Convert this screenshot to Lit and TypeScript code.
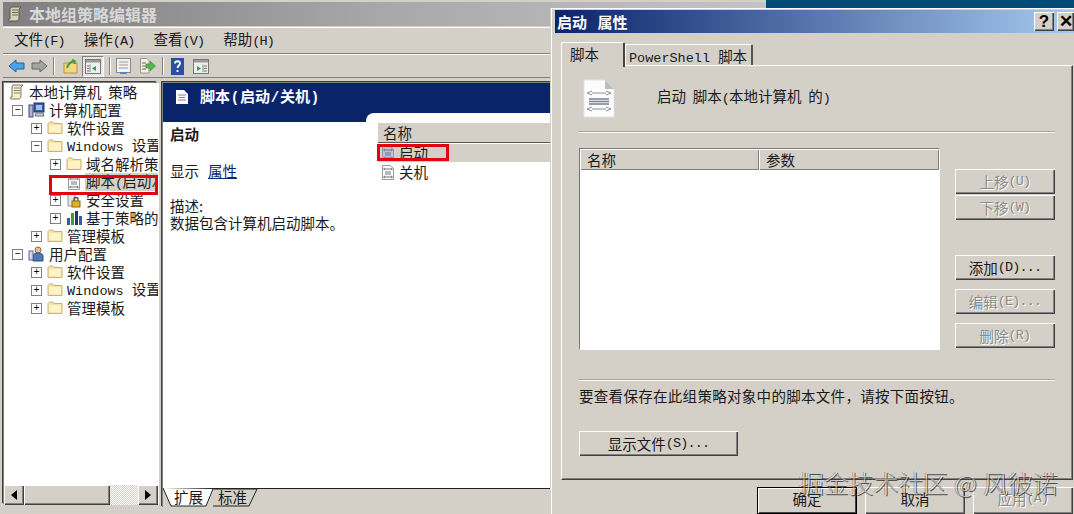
import { LitElement, html, css, svg } from "lit";
import { customElement } from "lit/decorators.js";

const L = (t: string) => html`<span class="lat">${t}</span>`;
const M = (t: string) => html`<span class="lat mn">${t}</span>`;

const folder = html`<svg class="ic" width="16" height="14" viewBox="0 0 16 14"><path d="M1 3.500V12.500H15V2.500H7L6 1H2.500L1 2.500Z" fill="#f7e3a4" stroke="#c9b27a"/><path d="M2 4H14V11.500H2Z" fill="#fdf2c8"/></svg>`;
const scriptIcon = (sel = false) => html`<svg class="ic" width="14" height="15" viewBox="0 0 14 15"><path d="M1.500 .5H9.500L12.500 3.500V14.500H1.500Z" fill="${sel ? "#b9c2da" : "#fff"}" stroke="#9a9a9a"/><path d="M4 4H10M4 7H10M4 9H10M4 12H10M4 3L2.500 4L4 5M10 3L11.500 4L10 5M4 11L2.500 12L4 13M10 11L11.500 12L10 13" stroke="#6d7383" fill="none"/></svg>`;
const scriptTree = html`<svg class="ic" width="16" height="15" viewBox="0 0 16 15"><path d="M2.500 .5H10.500L13.500 3.500V14.500H2.500Z" fill="#fff" stroke="#9a9a9a"/><path d="M5 4H11M5 7H11M5 9H11M5 12H11M5 3L3.500 4L5 5M11 3L12.500 4L11 5M5 11L3.500 12L5 13M11 11L12.500 12L11 13" stroke="#6d7383" fill="none"/></svg>`;
const policy = html`<svg class="ic" width="16" height="16" viewBox="0 0 16 16"><path d="M4 1H14L12 3V12C12 14 11 15 9 15H2C1 15 1 13 2 13H3V3Z" fill="#f4edd0" stroke="#7b7560"/><path d="M5 4H11M5 6.500H11M5 9H11" stroke="#8a8268"/></svg>`;
const computer = html`<svg class="ic" width="17" height="16" viewBox="0 0 17 16"><rect x="6" y="1" width="10" height="9" fill="#3a5fa8" stroke="#1c2f63"/><rect x="8" y="3" width="6" height="5" fill="#9ec3ee"/><path d="M8 11H15L16 14H7Z" fill="#c9ccd4" stroke="#6c7080"/><rect x="1" y="3" width="4" height="12" fill="#aab6d0" stroke="#3e4a70"/></svg>`;
const userIc = html`<svg class="ic" width="17" height="16" viewBox="0 0 17 16"><circle cx="10" cy="4" r="3" fill="#e9bf95" stroke="#8a6a48"/><path d="M5 15V10C5 8 7 7 10 7S15 8 15 10V15Z" fill="#4e79b5" stroke="#2d4a78"/><rect x="1" y="5" width="4" height="9" fill="#cfd8e8" stroke="#5c6a88"/></svg>`;
const secIc = html`<svg class="ic" width="16" height="15" viewBox="0 0 16 15"><path d="M2 1H9V13H2Z" fill="#dfe6ee" stroke="#8a95a5"/><rect x="6" y="8" width="8" height="6" fill="#e4b21f" stroke="#8d6c0c"/><path d="M8 8V6C8 4 12 4 12 6V8" fill="none" stroke="#555" stroke-width="1.400"/></svg>`;
const chartIc = html`<svg class="ic" width="16" height="16" viewBox="0 0 16 16"><rect x="1" y="8" width="3" height="7" fill="#2d5fae"/><rect x="5" y="3" width="3" height="12" fill="#3f9b46"/><rect x="9" y="1" width="3" height="14" fill="#24376f"/><rect x="13" y="6" width="3" height="9" fill="#2d5fae"/></svg>`;
const minus = html`<span class="exp">−</span>`;
const plus = html`<span class="exp">+</span>`;
const none = html`<span class="exp no"></span>`;

const arrow = (fill: string, stroke: string, flip: boolean) => html`<svg class="tb ${flip ? "flip" : ""}" width="17" height="14" viewBox="0 0 17 14"><path d="M1 7L8 1V4H16V10H8V13Z" fill="${fill}" stroke="${stroke}"/></svg>`;
const paneIc = (c: string, right = false) => html`<svg class="tb" width="16" height="15" viewBox="0 0 16 15"><rect x=".5" y=".5" width="15" height="14" fill="#eee" stroke="#777"/><rect x="1" y="1" width="14" height="2.500" fill="#9a9a9a"/><path d="M${right ? 10 : 5} 5.500V13" stroke="#888"/><path d="${right ? "M4 7L8 9.500L4 12Z" : "M11 7L7 9.500L11 12Z"}" fill="${c}"/><path d="${right ? "M11 7H14M11 9.500H14M11 12H14" : "M2 7H4M2 9.500H4M2 12H4"}" stroke="#777"/></svg>`;

const tree = [
  { lv: 0, ic: policy, t: html`本地计算机 策略` },
  { lv: 1, e: minus, ic: computer, t: html`计算机配置` },
  { lv: 2, e: plus, ic: folder, t: html`软件设置` },
  { lv: 2, e: minus, ic: folder, t: html`${L("Windows ")}设置` },
  { lv: 3, e: plus, ic: folder, t: html`域名解析策略` },
  { lv: 3, e: none, ic: scriptTree, t: html`脚本${M("(")}启动${M("/")}关机${M(")")}`, sel: true },
  { lv: 3, e: plus, ic: secIc, t: html`安全设置` },
  { lv: 3, e: plus, ic: chartIc, t: html`基于策略的 QoS` },
  { lv: 2, e: plus, ic: folder, t: html`管理模板` },
  { lv: 1, e: minus, ic: userIc, t: html`用户配置` },
  { lv: 2, e: plus, ic: folder, t: html`软件设置` },
  { lv: 2, e: plus, ic: folder, t: html`${L("Windows ")}设置` },
  { lv: 2, e: plus, ic: folder, t: html`管理模板` },
];

const indent = [9, 12, 31, 50];

@customElement("app-root")
export class AppRoot extends LitElement {
  static styles = css`
    :host {
      display: block;
      position: relative;
      width: 1074px;
      height: 514px;
      overflow: hidden;
      background: #004a75;
      font: 14.5px/18px "Noto Sans CJK SC", sans-serif;
      color: #1a1a1a;
      word-spacing: 3.5px;
    }
    .lat { font: 13.5px/18px "Liberation Mono", monospace; white-space: pre; word-spacing: 0; }
    .mn { letter-spacing: -.85px; }
    .mmc {
      position: absolute; left: 0; top: 0; width: 766px; height: 514px;
      background: #d4d0c8; display: flex; flex-direction: column;
      box-sizing: border-box; padding: 2px 0 0 0;
    }
    .title {
      height: 24px; margin-left: 3px; display: flex; align-items: center; gap: 6px; padding-left: 4px;
      background: linear-gradient(90deg, #7f7f7f, #a8a8a8 50%, #c4c4c4);
      color: #d8d8d8; font-weight: 700; font-size: 16px;
    }
    .menu { height: 27px; display: flex; align-items: center; margin: 1px 3px 0; padding-left: 11px; gap: 19px;
      border-top: 1px solid #fff; border-bottom: 1px solid #808080; box-sizing: border-box; }
    .tools { height: 24px; display: flex; align-items: center; margin: 0 3px; padding-left: 5px;
      border-top: 1px solid #fff; border-bottom: 1px solid #808080; box-sizing: border-box; }
    .tb { display: block; flex: none; }
    .flip { transform: scaleX(-1); }
    .sep { width: 1px; height: 18px; background: #808080; box-shadow: 1px 0 #fff; flex: none; }
    .sep.s1 { margin: 0 9px 0 5px; }
    .sep.s2 { margin: 0 6px 0 5px; }
    .sep.s3 { margin: 0 8px 0 6px; }
    .gap4 { width: 4px; flex: none; }
    .gap6 { width: 6px; flex: none; }
    .gap8 { width: 8px; flex: none; }
    .gap9 { width: 9px; flex: none; }
    .pressed { width: 22px; height: 21px; display: flex; align-items: center; justify-content: center; flex: none; box-sizing: border-box;
      border: 1px solid #fff; border-color: #808080 #fff #fff #808080;
      background: repeating-conic-gradient(#fff 0 25%, #d4d0c8 0 50%) 0 0 / 2px 2px; }
    .work { flex: 1; display: flex; gap: 5px; padding: 5px 0 0 4px; min-height: 0; align-items: flex-start; }
    .left { width: 154px; flex: none; display: flex; flex-direction: column; height: 422px; background: #fff;
      box-shadow: -1px -1px #808080, -2px -2px #404040, 1px 0 #fff; }
    .tree { flex: 1; overflow: hidden; }
    .row { display: flex; align-items: center; height: 18.04px; white-space: nowrap; overflow: hidden; }
    .row.sel .txt { background: #d4d0c8; }
    .txt { padding: 0 1px; margin-left: 3px; flex: none; }
    .exp { width: 9px; height: 9px; border: 1px solid #808080; flex: none; margin-right: 5px; font: 10px/9px "Liberation Mono", monospace; text-align: center; color: #000; background: #fff; }
    .exp.no { border-color: transparent; background: transparent; }
    .ic { display: block; flex: none; }
    .sb { height: 20px; display: flex; background: repeating-conic-gradient(#fff 0 25%, #d4d0c8 0 50%) 0 0 / 2px 2px; flex: none; }
    .bt3 { background: #d4d0c8; box-sizing: border-box; box-shadow: inset 1px 1px #fff, inset -1px -1px #404040, inset -2px -2px #808080; display: flex; align-items: center; justify-content: center; white-space: nowrap; }
    .sbb { width: 20px; flex: none; }
    .thumb { width: 86px; flex: none; }
    .track { flex: 1; }
    .right { flex: 1; height: 425px; display: flex; flex-direction: column; background: #fff; min-width: 0;
      box-shadow: -1px -1px #808080, -2px -2px #404040; }
    .hdr { background: #0a246a; color: #fff; font-weight: 700; font-size: 15px; flex: none; }
    .hdr-top { height: 30px; display: flex; align-items: center; gap: 11px; padding: 0 0 2px 12px; box-sizing: border-box; }
    .hp { display: inline-block; width: 10px; font: 700 14px/18px "Liberation Mono", monospace; text-align: center; }
    .hdr-low { height: 9px; display: flex; }
    .hdr-l { width: 203px; }
    .hdr-r { flex: 1; background: #fff; border-top-left-radius: 8px; }
    .body { flex: 1; display: flex; min-height: 0; }
    .desc { width: 215px; flex: none; box-sizing: border-box; padding: 3px 7px; }
    .desc b { display: block; margin-bottom: 19px; font-weight: 700; }
    .desc a { color: #0a246a; text-decoration: underline; margin-left: 9px; }
    .desc p { margin: 17px 0 0; line-height: 17px; }
    .list { flex: 1; padding-top: 1px; }
    .lhead { height: 19px; background: #d4d0c8; padding-left: 5px; display: flex; align-items: center; border-bottom: 1px solid #555; }
    .lrow { height: 18px; padding-left: 3px; display: flex; align-items: center; gap: 4px; margin-top: 1px; }
    .lrow.on { background: #d4d0c8; }
    .tabs { flex: none; height: 19px; display: flex; border-top: 1px solid #222; background: #d4d0c8; }
    .stab { position: relative; flex: none; height: 19px; line-height: 15px; box-sizing: border-box; }
    .stab svg { position: absolute; left: 0; top: -1px; }
    .stab span { position: relative; }
    .st1 { width: 50px; padding-left: 11px; }
    .st2 { width: 46px; padding-left: 5px; }

    .dlg {
      position: absolute; left: 551px; top: 8px; width: 523px; height: 506px; box-sizing: border-box;
      background: #d4d0c8; border-top: 1px solid #fff; border-left: 1px solid #fff; padding: 1px 0 0 3px;
      box-shadow: -1px 0 #d4d0c8; display: flex; flex-direction: column;
    }
    .dt { height: 23px; flex: none; display: flex; align-items: center; padding-left: 2px; gap: 3px; color: #fff; font-weight: 700; font-size: 15px; word-spacing: 7px;
      background: linear-gradient(90deg, #0a246a, #a6caf0); }
    .dt .sp { flex: 1; white-space: pre; }
    .cap { width: 20px; height: 19px; font: 700 17px/19px "Liberation Sans", sans-serif; color: #000; }
    .cap.x { width: 17px; }
    .dtabs { height: 24px; margin: 8px 0 0 6px; display: flex; align-items: flex-end; flex: none; position: relative; z-index: 1; }
    .dtab { box-sizing: border-box; background: #d4d0c8; border-top: 1px solid #fff; border-left: 1px solid #fff; border-right: 2px solid #555; border-radius: 2px 2px 0 0; }
    .dtab.a { width: 64px; height: 25px; padding: 2px 0 0 8px; border-right-color: #444; margin-bottom: -2px; }
    .dtab.b { height: 21px; padding: 2px 0 0 3px; white-space: nowrap; width: 128px; }
    .panel { width: 512px; height: 415px; box-sizing: border-box; margin-left: 6px; flex: none; padding: 0 17px 0 17px;
      border: 1px solid; border-color: #fff #404040 #404040 #fff; box-shadow: inset -1px -1px #808080; display: flex; flex-direction: column; }
    .phead { height: 65px; display: flex; align-items: center; gap: 42px; flex: none; padding: 0 0 0 4px; box-sizing: border-box; }
    .phead span { margin-bottom: 2px; }
    .phead .lat { margin: 0; }
    .rule { height: 1px; background: #a8a498; box-shadow: 0 1px #fff; flex: none; }
    .mid { display: flex; margin-top: 16px; height: 202px; flex: none; gap: 15px; }
    .plist { width: 361px; height: 202px; box-sizing: border-box; background: #fff; border: 1px solid; border-color: #777 #fff #fff #777; flex: none; }
    .phd { display: flex; height: 21px; box-sizing: border-box; background: #d4d0c8; }
    .phd > div { box-sizing: border-box; padding-left: 7px; box-shadow: inset 1px 1px #fff, inset -1px -1px #808080; line-height: 21px; }
    .c1 { width: 179px; }
    .c2 { width: 180px; }
    .btns { display: flex; flex-direction: column; padding-top: 21px; }
    .btn { width: 100px; height: 25px; flex: none; }
    .mt1 { margin-top: 1px; }
    .mt9 { margin-top: 9px; }
    .mt35 { margin-top: 35px; }
    .dis { color: #8c8a84; text-shadow: 1px 1px #fff; }
    .rule2 { margin-top: 29px; }
    .note { margin-top: 7px; height: 18px; letter-spacing: .3px; white-space: nowrap; }
    .show { width: 159px; height: 25px; margin-top: 26px; flex: none; }
    .foot { flex: 1; display: flex; gap: 8px; padding: 7px 0 0 202px; }
    .fb { width: 100px; height: 27px; flex: none; padding-bottom: 3px; }
    .def { box-shadow: inset 0 0 0 1px #000, inset 2px 2px #fff, inset -2px -2px #404040; }
    .mark { position: absolute; left: 799px; top: 464px; font: 300 24.8px/36px "Noto Sans CJK SC", sans-serif; white-space: pre; word-spacing: 1px;
      color: rgba(255,255,255,.55); text-shadow: 1px 1px 0 rgba(40,40,40,.75), -1px 0 0 rgba(40,40,40,.35); pointer-events: none; }
    .redbox { position: absolute; border: 3px solid #e2050f; box-sizing: border-box; pointer-events: none; }
    .r1 { left: 49px; top: 175px; width: 109px; height: 20px; }
    .r2 { left: 377px; top: 144px; width: 72px; height: 17px; }
  `;

  render() {
    return html`
      <div class="mmc">
        <div class="title">
          <svg class="ic" width="16" height="16" viewBox="0 0 16 16"><path d="M4 1H14L12 3V12C12 14 11 15 9 15H2C1 15 1 13 2 13H3V3Z" fill="#d8d3bb" stroke="#5d5847"/><path d="M5 4H11M5 6.500H11M5 9H11" stroke="#6a6552"/></svg>
          <span>本地组策略编辑器</span>
        </div>
        <div class="menu">
          <span>文件${M("(F)")}</span><span>操作${M("(A)")}</span><span>查看${M("(V)")}</span><span>帮助${M("(H)")}</span>
        </div>
        <div class="tools">
          ${arrow("#4da3ea", "#1f5fa8", false)}
          <span class="gap6"></span>
          ${arrow("#a5a5a0", "#666", true)}
          <span class="sep s1"></span>
          <svg class="tb" width="15" height="15" viewBox="0 0 15 15"><path d="M1 4V14H14V4Z" fill="#f3d77f" stroke="#b5963f"/><path d="M4 9C5 5 7 3 11 2L9 1M11 2L12 5" fill="none" stroke="#3f9b46" stroke-width="2"/></svg>
          <span class="gap4"></span>
          <div class="pressed">${paneIc("#2f9e44")}</div>
          <span class="sep s2"></span>
          <svg class="tb" width="15" height="16" viewBox="0 0 15 16"><rect x=".5" y=".5" width="14" height="14" fill="#f2f2f2" stroke="#8a8a8a"/><path d="M3 4H12M3 7H12M3 10H12" stroke="#9a9a9a"/><path d="M4 15H11" stroke="#3f8fd0" stroke-width="2"/></svg>
          <span class="gap8"></span>
          <svg class="tb" width="17" height="16" viewBox="0 0 17 16"><path d="M1.500 .5H8L10 2.500V15H1.500Z" fill="#f6f1dc" stroke="#999"/><path d="M3 5H7M3 8H7M3 11H7" stroke="#666"/><path d="M7 6H11V3L16.500 8L11 13V10H7Z" fill="#57b94a" stroke="#2f8a2f" stroke-width=".6"/></svg>
          <span class="sep s3"></span>
          <svg class="tb" width="13" height="17" viewBox="0 0 13 17"><rect width="13" height="17" fill="#2a4fa5"/><path d="M4 5.500C4 2.500 9 2.500 9 5.500C9 7.500 6.500 7.500 6.500 10M6.500 12V14" stroke="#fff" stroke-width="1.800" fill="none"/></svg>
          <span class="gap9"></span>
          ${paneIc("#2f9e44", true)}
        </div>
        <div class="work">
          <div class="left">
            <div class="tree">
              ${tree.map(
                (r) => html`<div class="row ${r.sel ? "sel" : ""}" style="padding-left:${indent[r.lv] - 4}px">${r.e ?? ""}${r.ic}<span class="txt">${r.t}</span></div>`
              )}
            </div>
            <div class="sb">
              <div class="bt3 sbb"><svg width="6" height="10" viewBox="0 0 6 10"><path d="M6 0V10L0 5Z" fill="#000"/></svg></div>
              <div class="bt3 thumb"></div>
              <div class="track"></div>
              <div class="bt3 sbb"><svg width="6" height="10" viewBox="0 0 6 10"><path d="M0 0V10L6 5Z" fill="#000"/></svg></div>
            </div>
          </div>
          <div class="right">
            <div class="hdr">
              <div class="hdr-top">
                <svg class="ic" width="14" height="16" viewBox="0 0 14 16"><path d="M1 1H9L13 5V15H1Z" fill="#fff"/><path d="M3 6H11M4 8.500H10M3 11H11" stroke="#7a83a0"/></svg>
                <span>脚本<span class="hp">(</span>启动<span class="hp">/</span>关机<span class="hp">)</span></span>
              </div>
              <div class="hdr-low"><div class="hdr-l"></div><div class="hdr-r"></div></div>
            </div>
            <div class="body">
              <div class="desc">
                <b>启动</b>
                <div>显示<a>属性</a></div>
                <p>描述:<br />数据包含计算机启动脚本。</p>
              </div>
              <div class="list">
                <div class="lhead">名称</div>
                <div class="lrow on">${scriptIcon(true)}<span>启动</span></div>
                <div class="lrow">${scriptIcon()}<span>关机</span></div>
              </div>
            </div>
            <div class="tabs">
              <div class="stab st1"><svg width="52" height="20" viewBox="0 0 52 20">${svg`<path d="M0 0L8 18H43L50 1" fill="#fff" stroke="#222"/>`}</svg><span>扩展</span></div>
              <div class="stab st2"><svg width="48" height="20" viewBox="0 0 48 20">${svg`<path d="M0 1H44L36 18H0" fill="#d4d0c8" stroke="#222"/>`}</svg><span>标准</span></div>
            </div>
          </div>
        </div>
      </div>

      <div class="dlg">
        <div class="dt">
          <span class="sp">启动 属性</span>
          <div class="bt3 cap">?</div>
          <div class="bt3 cap x">✕</div>
        </div>
        <div class="dtabs">
          <div class="dtab a">脚本</div>
          <div class="dtab b">${L("PowerShell ")}脚本</div>
        </div>
        <div class="panel">
          <div class="phead">
            <svg class="ic" width="32" height="40" viewBox="0 0 32 40"><path d="M1 1H22L31 10V38H1Z" fill="#fcfcfc" stroke="#e4e4e4"/><path d="M22 1V10H31Z" fill="#bdbdc5"/><path d="M9 12L4 14L9 16M23 12L28 14L23 16M9 28L4 30L9 32M23 28L28 30L23 32M9 14H23M9 30H23" fill="none" stroke="#8d8f9c"/><path d="M6 20H26M6 22.500H26M6 25H26" stroke="#787b92" stroke-width="1.400"/></svg>
            <span>启动 脚本${M("(")}本地计算机 的${M(")")}</span>
          </div>
          <div class="rule"></div>
          <div class="mid">
            <div class="plist">
              <div class="phd"><div class="c1">名称</div><div class="c2">参数</div></div>
            </div>
            <div class="btns">
              <div class="bt3 btn dis">上移${M("(U)")}</div>
              <div class="bt3 btn dis mt1">下移${M("(W)")}</div>
              <div class="bt3 btn mt35">添加${M("(D)...")}</div>
              <div class="bt3 btn dis mt9">编辑${M("(E)...")}</div>
              <div class="bt3 btn dis mt9">删除${M("(R)")}</div>
            </div>
          </div>
          <div class="rule rule2"></div>
          <div class="note">要查看保存在此组策略对象中的脚本文件，请按下面按钮。</div>
          <div class="bt3 show">显示文件${M("(S)...")}</div>
        </div>
        <div class="foot">
          <div class="bt3 fb def">确定</div>
          <div class="bt3 fb">取消</div>
          <div class="bt3 fb dis">应用${M("(A)")}</div>
        </div>
      </div>

      <div class="redbox r1"></div>
      <div class="redbox r2"></div>
      <div class="mark">掘金技术社区 @ 风彼诺</div>
    `;
  }
}
